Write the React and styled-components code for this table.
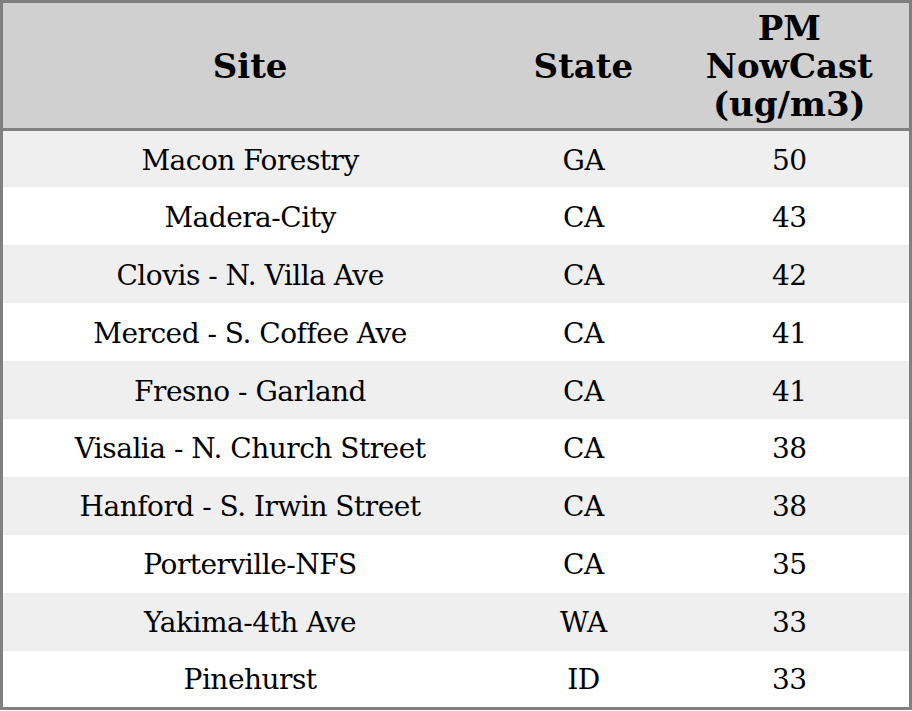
import React from "react";
import styled, { createGlobalStyle } from "styled-components";

const Global = createGlobalStyle`
  html, body { margin: 0; padding: 0; background: #ffffff; }
  body { font-family: "DejaVu Serif", serif; }
`;

const Table = styled.table`
  width: 912px;
  border-collapse: collapse;
  border: 3px solid #808080;
  font-family: "DejaVu Serif", serif;
  color: #000;
  table-layout: fixed;
`;

const HeadCell = styled.th`
  background: #d0d0d0;
  font-weight: bold;
  font-size: 34px;
  line-height: 38px;
  height: 128px;
  padding: 0 4px;
  text-align: center;
  vertical-align: middle;
  border-bottom: 3px solid #808080;
  box-sizing: border-box;
`;

const Row = styled.tr`
  background: ${(p) => (p.$odd ? "#efefef" : "#ffffff")};
`;

const Cell = styled.td`
  font-size: 28px;
  letter-spacing: -0.5px;
  height: 57.9px;
  padding: 2px 4px 0;
  text-align: center;
  vertical-align: middle;
  box-sizing: border-box;
`;

const rows = [
  ["Macon Forestry", "GA", "50"],
  ["Madera-City", "CA", "43"],
  ["Clovis - N. Villa Ave", "CA", "42"],
  ["Merced - S. Coffee Ave", "CA", "41"],
  ["Fresno - Garland", "CA", "41"],
  ["Visalia - N. Church Street", "CA", "38"],
  ["Hanford - S. Irwin Street", "CA", "38"],
  ["Porterville-NFS", "CA", "35"],
  ["Yakima-4th Ave", "WA", "33"],
  ["Pinehurst", "ID", "33"],
];

export default function App() {
  return (
    <>
      <Global />
      <Table>
        <colgroup>
          <col style={{ width: 494 }} />
          <col style={{ width: 172 }} />
          <col style={{ width: 240 }} />
        </colgroup>
        <thead>
          <tr>
            <HeadCell>Site</HeadCell>
            <HeadCell>State</HeadCell>
            <HeadCell>
              PM
              <br />
              NowCast
              <br />
              (ug/m3)
            </HeadCell>
          </tr>
        </thead>
        <tbody>
          {rows.map((r, i) => (
            <Row key={i} $odd={i % 2 === 0}>
              <Cell>{r[0]}</Cell>
              <Cell>{r[1]}</Cell>
              <Cell>{r[2]}</Cell>
            </Row>
          ))}
        </tbody>
      </Table>
    </>
  );
}
